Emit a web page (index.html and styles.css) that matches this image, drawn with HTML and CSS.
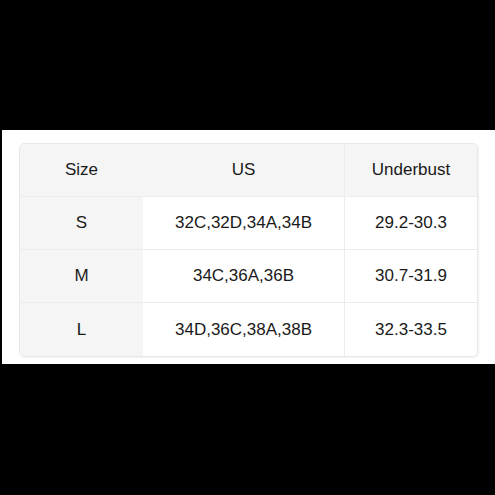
FILE: index.html
```html
<!DOCTYPE html>
<html>
<head>
<meta charset="utf-8">
<link rel="stylesheet" href="styles.css">
</head>
<body>
<div class="band">
  <table class="size-table">
    <tr class="head">
      <th class="c1">Size</th>
      <th class="c2">US</th>
      <th class="c3">Underbust</th>
    </tr>
    <tr>
      <td class="c1 label">S</td>
      <td class="c2">32C,32D,34A,34B</td>
      <td class="c3">29.2-30.3</td>
    </tr>
    <tr>
      <td class="c1 label">M</td>
      <td class="c2">34C,36A,36B</td>
      <td class="c3">30.7-31.9</td>
    </tr>
    <tr>
      <td class="c1 label">L</td>
      <td class="c2">34D,36C,38A,38B</td>
      <td class="c3">32.3-33.5</td>
    </tr>
  </table>
</div>
</body>
</html>
```
FILE: styles.css
```css
html, body {
  margin: 0;
  padding: 0;
  background: #000;
  width: 495px;
  height: 495px;
  overflow: hidden;
}
.band {
  margin-top: 130px;
  margin-left: 2px;
  height: 234px;
  background: #fff;
  box-sizing: border-box;
  padding: 13px 0 0 17px;
}
.size-table {
  border-collapse: separate;
  border-spacing: 0;
  width: 459px;
  border: 1px solid #e8e8e8;
  border-radius: 5px;
  overflow: hidden;
  box-shadow: 1px 1px 2px rgba(0,0,0,0.06);
  font-family: "Liberation Sans", Arial, sans-serif;
  font-size: 17px;
  color: #1a1a1a;
}
.size-table th, .size-table td {
  font-weight: normal;
  text-align: center;
  padding: 0;
  height: 52px;
  border-bottom: 1px solid #ececec;
}
.size-table tr:last-child td {
  border-bottom: none;
  height: 53px;
}
.head th {
  background: #f5f5f5;
}
.c1 {
  width: 123px;
}
.c2 {
  width: 201px;
  border-right: 1px solid #ececec;
}
.label {
  background: #f5f5f5;
}
```
